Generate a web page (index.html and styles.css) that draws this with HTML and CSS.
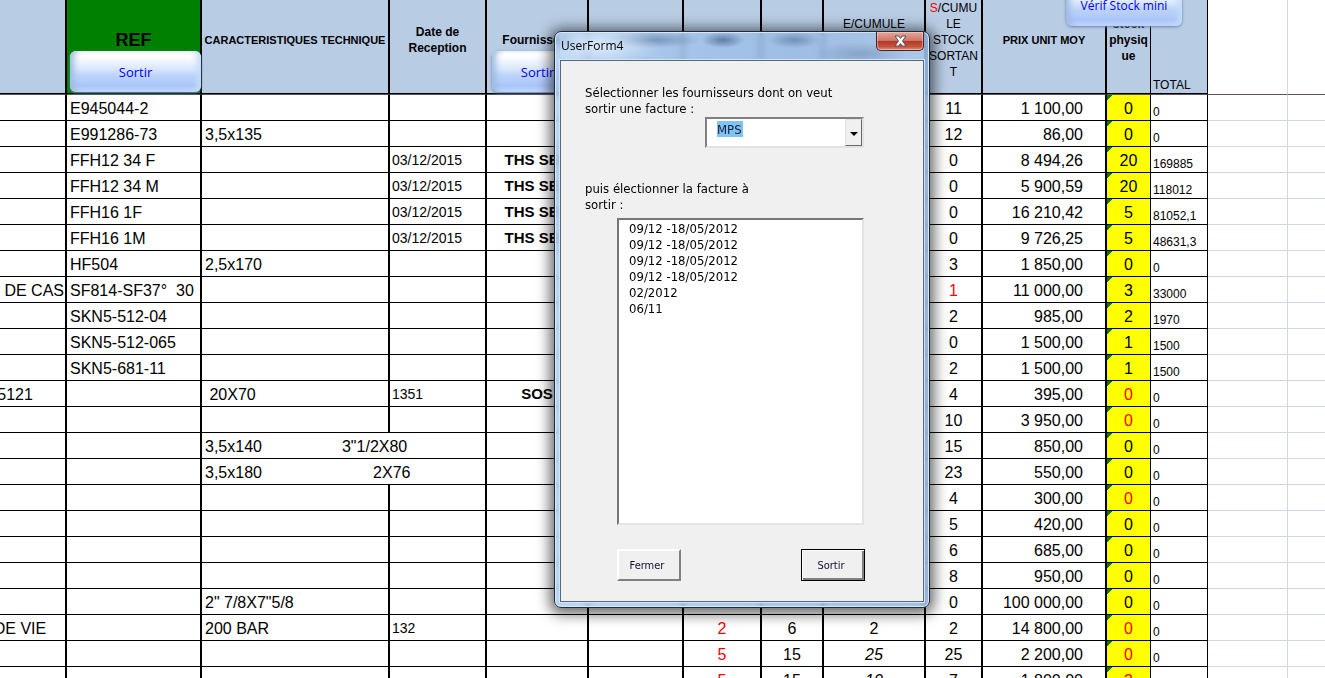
FILE: index.html
```
<!DOCTYPE html>
<html lang="fr">
<head>
<meta charset="utf-8">
<meta name="viewport" content="width=device-width, initial-scale=1">
<title>Stock</title>
<link rel="stylesheet" href="styles.css">
</head>
<body>

<table class="sheet">
  <colgroup>
    <col class="c-name"><col class="c-ref"><col class="c-carac"><col class="c-date"><col class="c-fourn">
    <col class="c-fact"><col class="c-in"><col class="c-init"><col class="c-cumul"><col class="c-out">
    <col class="c-prix"><col class="c-phys"><col class="c-total"><col class="c-free"><col>
  </colgroup>
  <thead>
    <tr>
      <th></th>
      <th class="ref">REF<button type="button" class="shape ref-btn">Sortir</button></th>
      <th class="caps">CARACTERISTIQUES TECHNIQUE</th>
      <th>Date de<br>Reception</th>
      <th>Fournisseur<button type="button" class="shape fourn-btn">Sortir</button></th>
      <th></th>
      <th></th>
      <th></th>
      <th class="plain">E/CUMULE<br><br><br></th>
      <th class="plain"><span class="red">S</span>/CUMU<br>LE<br>STOCK<br>SORTAN<br>T</th>
      <th class="caps">PRIX UNIT MOY<button type="button" class="shape verif-btn">Vérif Stock mini</button></th>
      <th class="phys-head">stock<br>physiq<br>ue</th>
      <th class="total-head">TOTAL</th>
      <th class="free"></th>
      <th class="free"></th>
    </tr>
  </thead>
  <tbody id="rows"></tbody>
</table>

<div class="window" role="dialog" aria-labelledby="winTitle">
  <div class="title-bar">
    <span id="winTitle">UserForm4</span>
    <button type="button" class="close" aria-label="Fermer la fenêtre">
      <svg width="13" height="12" viewBox="0 0 13 12">
        <path d="M1 1h3.6l1.9 2.4L8.400 1H12L8.500 6 12 11H8.400L6.500 8.600 4.600 11H1l3.500-5z" fill="#fff" stroke="#54505c" stroke-width="1"/>
      </svg>
    </button>
  </div>
  <form class="panel">
    <label for="supplier">Sélectionner les fournisseurs dont on veut<br>sortir une facture :</label>
    <div class="combo">
      <select id="supplier"><option>MPS</option></select>
      <span class="arrow"></span>
    </div>
    <label for="invoices" class="second">puis électionner la facture à<br>sortir :</label>
    <select id="invoices" class="list" size="19">
      <option>09/12 -18/05/2012</option>
      <option>09/12 -18/05/2012</option>
      <option>09/12 -18/05/2012</option>
      <option>09/12 -18/05/2012</option>
      <option>02/2012</option>
      <option>06/11</option>
    </select>
    <div class="actions">
      <button type="button">Fermer</button>
      <button type="button" class="default">Sortir</button>
    </div>
  </form>
</div>

<script>
// name, ref, carac, date, fournisseur, facture, entree, initial, e/cumule, s/cumule, prix, physique, total
var rows = [
  ["", "E945044-2", "", "", "", "", "", "", "", "11", "1 100,00", "0", "0"],
  ["", "E991286-73", "3,5x135", "", "", "", "", "", "", "12", "86,00", "0", "0"],
  ["", "FFH12 34 F", "", "03/12/2015", "THS SER", "", "", "", "", "0", "8 494,26", "20", "169885"],
  ["", "FFH12 34 M", "", "03/12/2015", "THS SER", "", "", "", "", "0", "5 900,59", "20", "118012"],
  ["", "FFH16 1F", "", "03/12/2015", "THS SER", "", "", "", "", "0", "16 210,42", "5", "81052,1"],
  ["", "FFH16 1M", "", "03/12/2015", "THS SER", "", "", "", "", "0", "9 726,25", "5", "48631,3"],
  ["", "HF504", "2,5x170", "", "", "", "", "", "", "3", "1 850,00", "0", "0"],
  ["DE CAS", "SF814-SF37°  30", "", "", "", "", "", "", "", "!1", "11 000,00", "3", "33000"],
  ["", "SKN5-512-04", "", "", "", "", "", "", "", "2", "985,00", "2", "1970"],
  ["", "SKN5-512-065", "", "", "", "", "", "", "", "0", "1 500,00", "1", "1500"],
  ["", "SKN5-681-11", "", "", "", "", "", "", "", "2", "1 500,00", "1", "1500"],
  ["5121       ", "", " 20X70", "1351", "SOS", "", "", "", "", "4", "395,00", "!0", "0"],
  ["", "", "", "", "", "", "", "", "", "10", "3 950,00", "!0", "0"],
  ["", "", "3,5x140                  3\"1/2X80", null, "", "", "", "", "", "15", "850,00", "0", "0"],
  ["", "", "3,5x180                         2X76", null, "", "", "", "", "", "23", "550,00", "0", "0"],
  ["", "", "", "", "", "", "", "", "", "4", "300,00", "!0", "0"],
  ["", "", "", "", "", "", "", "", "", "5", "420,00", "0", "0"],
  ["", "", "", "", "", "", "", "", "", "6", "685,00", "0", "0"],
  ["", "", "", "", "", "", "", "", "", "8", "950,00", "0", "0"],
  ["", "", "2\" 7/8X7\"5/8", "", "", "", "", "", "", "0", "100 000,00", "0", "0"],
  ["DE VIE    ", "", "200 BAR", "132", "", "", "!2", "6", "2", "2", "14 800,00", "!0", "0"],
  ["", "", "", "", "", "", "!5", "15", "/25", "25", "2 200,00", "!0", "0"],
  ["", "", "", "", "", "", "!5", "15", "/10", "7", "1 800,00", "!3", ""]
];
var cols = ["name", "text", "text", "date", "fourn", "num", "num", "num", "num", "num", "prix", "phys", "total", "free", "free"];
var body = document.getElementById("rows");

rows.forEach(function(row) {
  var tr = body.insertRow();
  cols.forEach(function(col, i) {
    var value = row[i] || "";
    // null means that the text before it runs over this cell
    if (row[i] === null) {
      tr.lastChild.colSpan = 2;
      return;
    }
    var td = tr.insertCell();
    td.className = col;
    // "!" = red, "/" = italic
    if (value[0] === "!") {
      td.className += " red";
      value = value.slice(1);
    } else if (value[0] === "/") {
      td.className += " italic";
      value = value.slice(1);
    }
    td.textContent = value;
  });
});
</script>

</body>
</html>
```
FILE: styles.css
```
* {
  box-sizing: border-box;
}

html, body {
  height: 100%;
}

body {
  margin: 0;
  overflow: hidden;
  position: relative;
  background: #fff;
  font-family: "Liberation Sans", Arial, sans-serif;
  color: #000;
}

/* Worksheet, scrolled a little to the right */
.sheet {
  width: calc(100% + 60px);
  margin-left: -60px;
  table-layout: fixed;
  border-collapse: separate;
  border-spacing: 0;
}

.c-name { width: 127px; }
.c-ref { width: 135px; }
.c-carac { width: 188px; }
.c-date { width: 97px; }
.c-fourn { width: 102px; }
.c-fact { width: 95px; }
.c-in { width: 78px; }
.c-init { width: 62px; }
.c-cumul { width: 102px; }
.c-out { width: 57px; }
.c-prix { width: 124px; }
.c-phys { width: 44px; }
.c-total { width: 57px; }
.c-free { width: 80px; }

.sheet th {
  position: relative;
  height: 95px;
  padding: 0 0 14px;
  background: #b8cce4;
  border-right: 2px solid #000;
  border-bottom: 1px solid #5c5456;
  box-shadow: inset 0 -1px #000;
  font-size: 12px;
  line-height: 16px;
  white-space: nowrap;
}

.sheet th.ref {
  background: #008000;
  font-size: 18px;
}

.sheet th.caps {
  font-size: 11px;
}

.sheet th.plain {
  font-weight: normal;
}

.sheet th.phys-head {
  border-right-width: 1px;
}

.sheet th.total-head {
  padding: 0 2px 1px;
  border-right-width: 1px;
  font-weight: normal;
  text-align: left;
  vertical-align: bottom;
}

.sheet td {
  height: 26px;
  padding: 2px 2px 0;
  border-right: 2px solid #000;
  border-bottom: 1px solid #000;
  font-size: 16px;
  line-height: 20px;
  white-space: pre;
}

.sheet td.name {
  padding-right: 1px;
  text-align: right;
}

.sheet td.text {
  padding-left: 3px;
}

.sheet td.date {
  padding-top: 0;
  font-size: 14px;
}

.sheet td.fourn {
  padding-top: 0;
  font-size: 15px;
  font-weight: bold;
  text-align: center;
}

.sheet td.num {
  text-align: center;
}

.sheet td.prix {
  padding-right: 22px;
  text-align: right;
}

.sheet td.phys {
  border-right-width: 1px;
  background: linear-gradient(135deg, #008000 4px, #ffff00 4px);
  text-align: center;
}

.sheet td.total {
  border-right-width: 1px;
  font-size: 12px;
  line-height: 16px;
  vertical-align: bottom;
}

.sheet td.free {
  border-right: 1px solid #d0d7e5;
  border-bottom: 1px solid #d0d7e5;
}

.sheet th.free {
  background: #fff;
  border-right: 1px solid #d0d7e5;
  box-shadow: none;
}

.sheet .free:last-child {
  border-right: 0;
}

.sheet .red {
  color: #f00;
}

.sheet .italic {
  font-style: italic;
}

/* Bevelled buttons drawn over the header row */
.shape {
  position: absolute;
  top: 51px;
  left: 3px;
  width: 131px;
  height: 41px;
  padding: 0;
  border: 0;
  border-radius: 6px;
  background: linear-gradient(#fff 12%, #dbe9fd 42%, #bdd3fb 60%, #a9c5f9 85%, #c4d8fb);
  box-shadow: inset 7px 0 6px -3px #9fbbdf, inset -7px 0 6px -3px #c5dcf8, 0 1px 3px #6484ad;
  color: #00f;
  font-family: "Open Sans", sans-serif;
  font-size: 13px;
  z-index: 1;
}

.fourn-btn {
  left: 5px;
  width: 91px;
}

.verif-btn {
  top: -15px;
  left: 83px;
  width: 116px;
  font-size: 12px;
}

/* Dialog window over the sheet */
.window {
  position: absolute;
  z-index: 2;
  top: 31px;
  left: 554px;
  width: 376px;
  padding: 0 5px 5px;
  border: 1px solid #1d2a38;
  border-radius: 7px;
  background: linear-gradient(90deg, rgba(170, 203, 240, 0.8), rgba(140, 176, 218, 0.8));
  backdrop-filter: blur(3px);
  box-shadow: inset 0 0 0 1px #d8e9fb, 0 2px 14px 4px rgba(0, 0, 0, 0.6);
}

.title-bar {
  display: flex;
  justify-content: space-between;
  align-items: center;
  height: 28px;
  padding-left: 1px;
  background:
    radial-gradient(ellipse 60px 22px at 40px 14px, rgba(225, 238, 252, 0.9), transparent),
    radial-gradient(ellipse 22px 8px at 163px 8px, rgba(50, 80, 120, 0.6), transparent),
    radial-gradient(ellipse 50px 8px at 92px 8px, rgba(70, 100, 140, 0.5), transparent),
    radial-gradient(ellipse 26px 8px at 234px 8px, rgba(70, 100, 140, 0.5), transparent),
    radial-gradient(ellipse 46px 12px at 300px 22px, rgba(90, 120, 160, 0.4), transparent),
    linear-gradient(90deg, transparent 65%, rgba(190, 212, 238, 0.6));
  font-family: "Open Sans", sans-serif;
  font-size: 12px;
  line-height: 26px;
}

.close {
  display: flex;
  justify-content: center;
  align-items: center;
  align-self: flex-start;
  width: 48px;
  height: 19px;
  padding: 0;
  border: 1px solid #4a2028;
  border-top: 0;
  border-radius: 0 0 5px 5px;
  background: linear-gradient(#e3a79d, #cf7466 48%, #b03a27 50%, #c4523c 80%, #e08f78);
  box-shadow: inset 0 0 0 1px rgba(255, 220, 210, 0.5);
}

.panel {
  display: flex;
  flex-direction: column;
  padding: 24px 58px 20px 24px;
  border: 1px solid #56687c;
  background: #f0f0f0;
  box-shadow: 0 0 0 1px #d3e4f6;
  font-family: "DejaVu Sans Condensed", Tahoma, sans-serif;
  font-size: 13px;
  line-height: 16px;
}

.panel label {
  white-space: nowrap;
}

.panel .second {
  margin-top: 33px;
}

.combo {
  position: relative;
  align-self: flex-end;
  width: 159px;
  height: 31px;
  margin-right: 1px;
}

.combo select {
  appearance: none;
  width: 100%;
  height: 100%;
  padding: 0 20px 6px 10px;
  border: 2px solid;
  border-color: #808080 #e3e3e3 #e3e3e3 #808080;
  border-radius: 0;
  outline: 0;
  background: #fff linear-gradient(#7fc4f5, #7fc4f5) 10px 2px / 26px 16px no-repeat;
  color: #1a1a3a;
  font: inherit;
}

.combo .arrow {
  position: absolute;
  top: 2px;
  right: 2px;
  bottom: 2px;
  width: 17px;
  border: 1px solid;
  border-color: #e3e3e3 #696969 #696969 #e3e3e3;
  background: #f0f0f0;
  pointer-events: none;
}

.combo .arrow::after {
  content: "";
  display: block;
  width: 0;
  margin: 12px auto 0;
  border: 4px solid transparent;
  border-top-color: #000;
  border-bottom: 0;
}

.list {
  width: 247px;
  height: 307px;
  margin: 5px 0 24px 32px;
  padding: 1px 0 0;
  border: 2px solid;
  border-color: #767676 #e3e3e3 #e3e3e3 #767676;
  border-radius: 0;
  outline: 0;
  background: #fff;
  color: #000;
  font: inherit;
  overflow: hidden;
}

.list option {
  height: 16px;
  min-height: 16px;
  padding: 0 0 0 10px;
  line-height: 16px;
}

.actions {
  display: flex;
  justify-content: space-between;
  padding-left: 32px;
}

.actions button {
  width: 64px;
  height: 32px;
  padding: 0 4px 0 0;
  border: 2px solid;
  border-color: #fff #808080 #808080 #fff;
  border-radius: 0;
  background: #f0f0f0;
  color: #101030;
  font-family: inherit;
  font-size: 11px;
}

.actions .default {
  border: 1px solid #000;
  box-shadow: inset 1px 1px #fff, inset -2px -2px #808080;
}
```
